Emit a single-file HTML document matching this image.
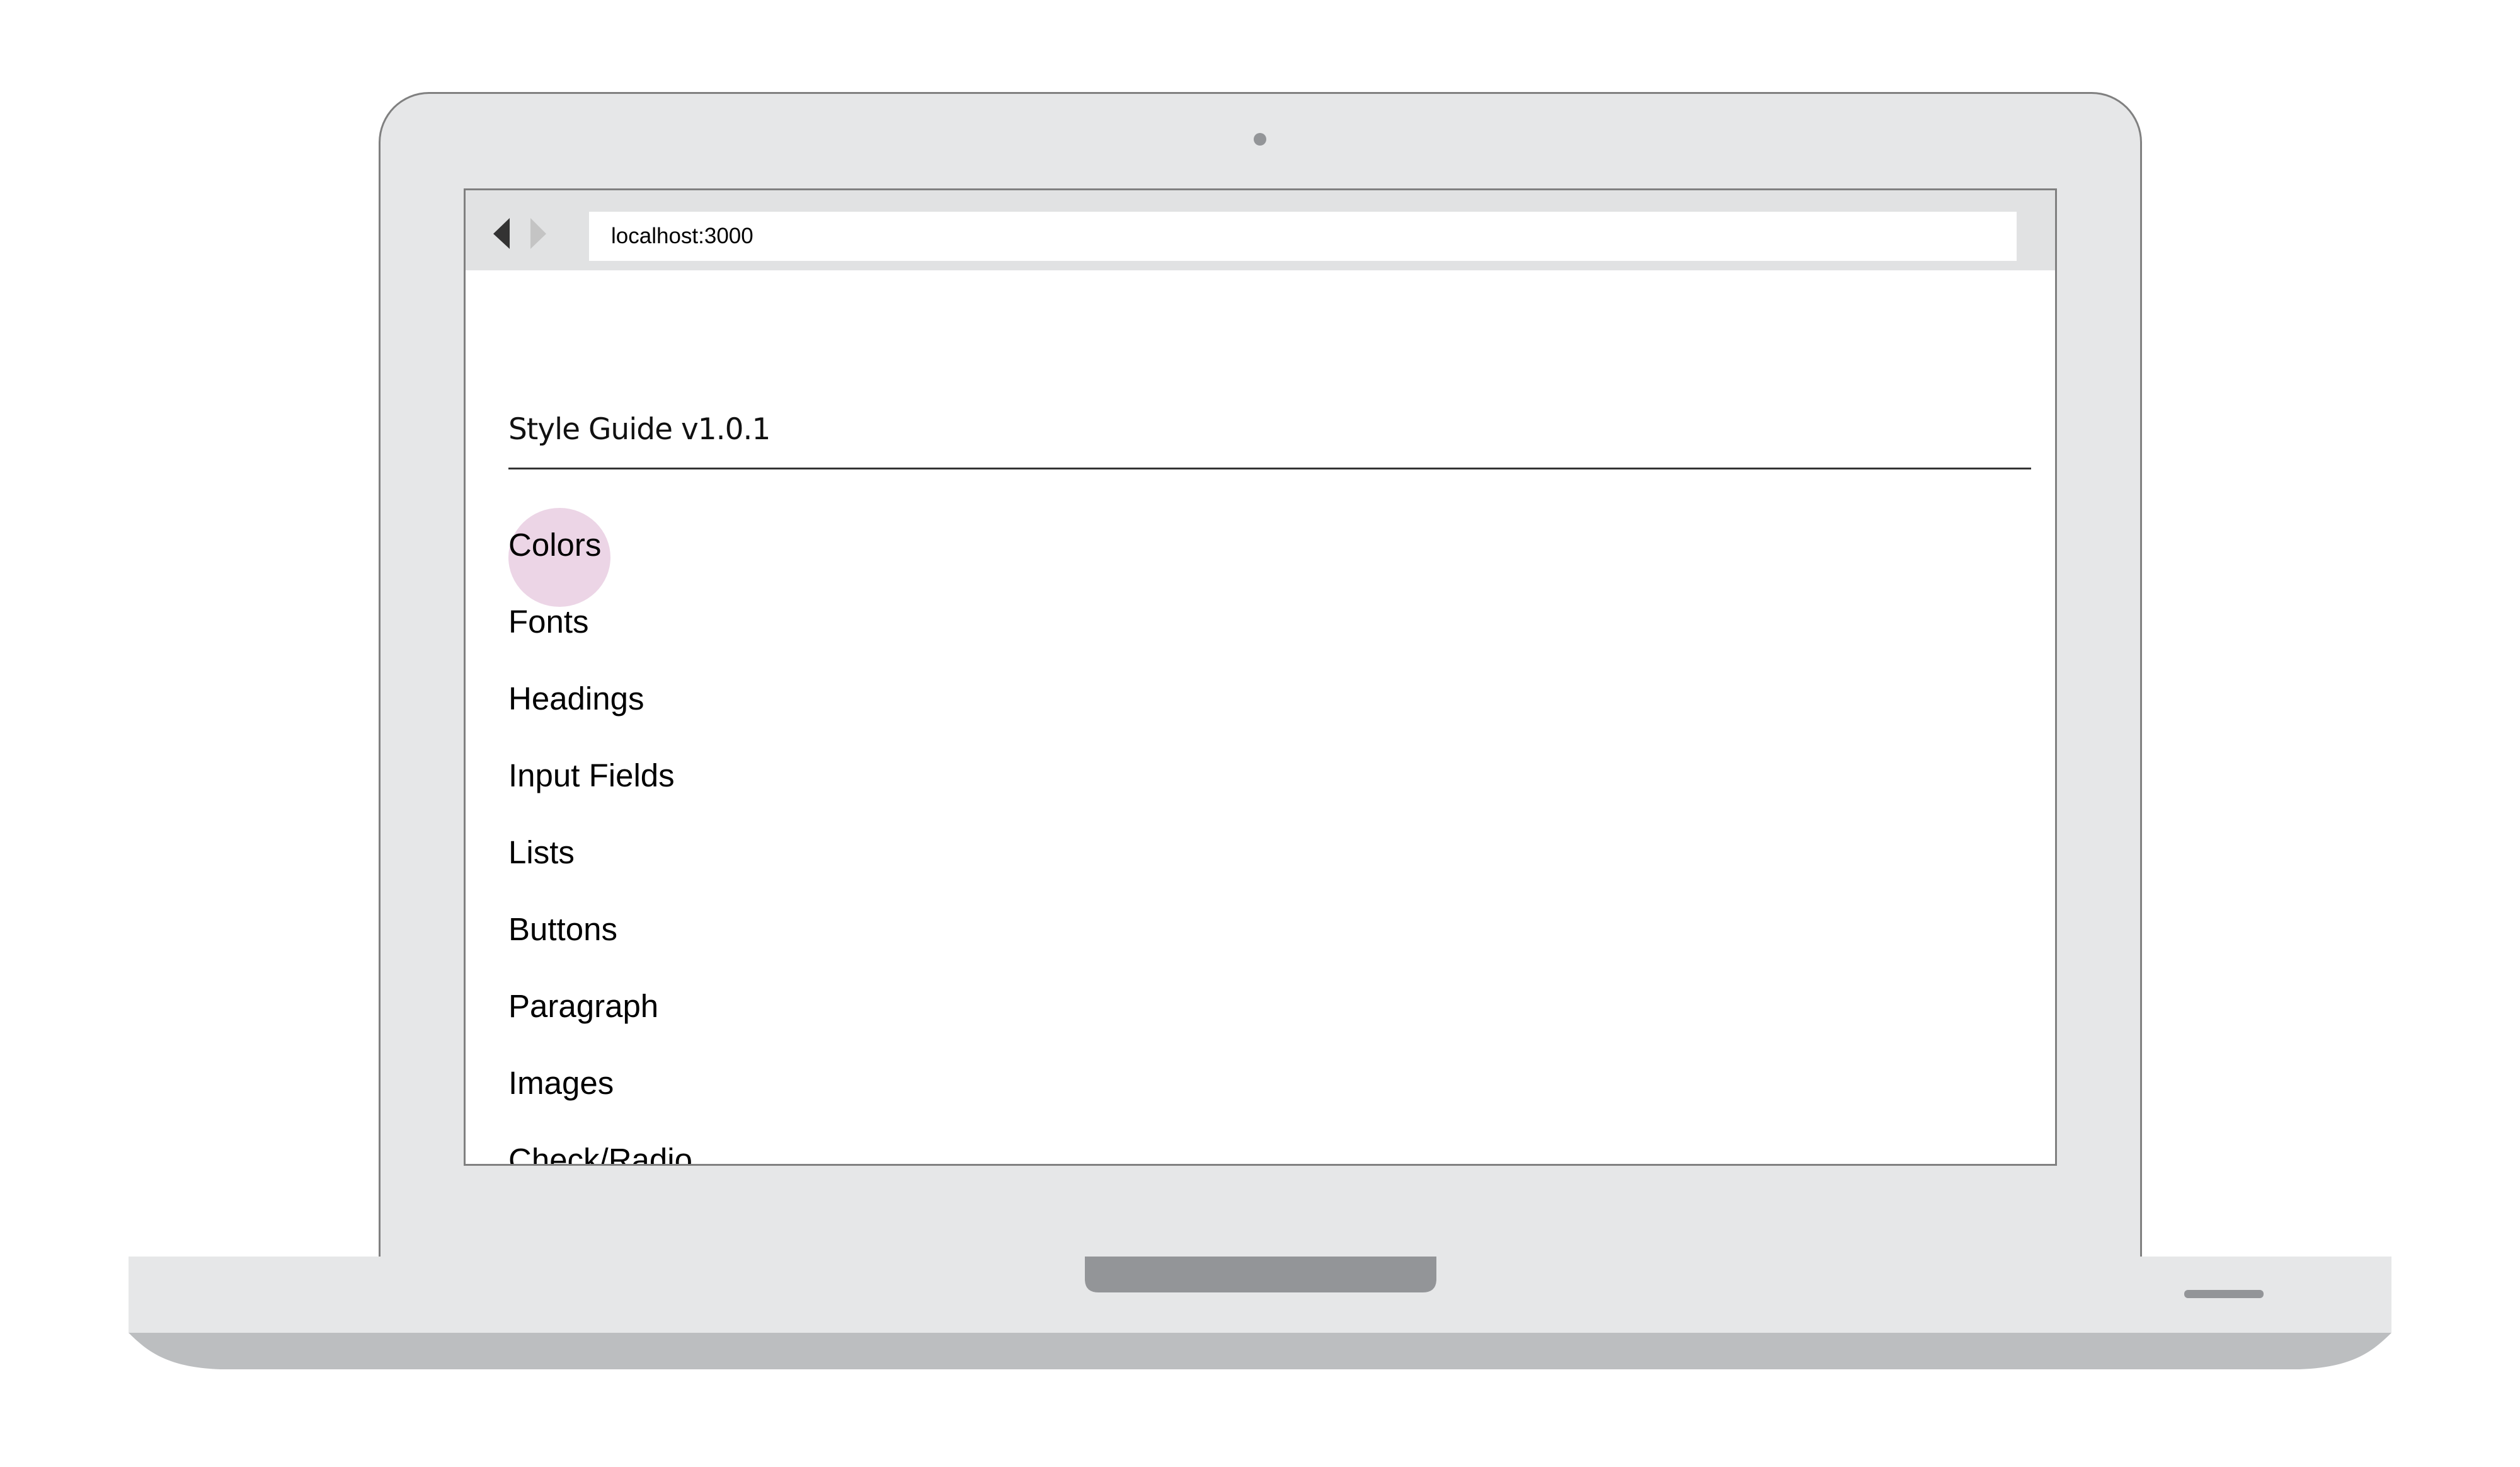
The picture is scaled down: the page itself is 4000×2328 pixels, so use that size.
<!DOCTYPE html>
<html><head><meta charset="utf-8"><style>
*{margin:0;padding:0;box-sizing:border-box}
body{width:4000px;height:2328px;background:#fff;position:relative;overflow:hidden;font-family:"Liberation Sans",sans-serif}
.abs{position:absolute}
#lid{left:601px;top:146px;width:2799px;height:1900px;background:#e6e7e8;border:3px solid #808080;border-bottom:none;border-radius:80px 80px 0 0}
#cam{left:1990px;top:211px;width:20px;height:20px;border-radius:50%;background:#939598}
#screen{left:736px;top:299px;width:2529px;height:1551px;background:#fff;border:3px solid #808080;overflow:hidden}
#bar{left:0;top:0;width:100%;height:127px;background:#e1e2e3}
#url{left:196px;top:34px;width:2266px;height:78px;background:#fff;font-size:35px;color:#000;line-height:78px;padding-left:35px}
.item{position:absolute;left:68px;font-size:51px;color:#000;line-height:1;white-space:nowrap}
#rule{left:68px;top:440px;width:2417px;height:3px;background:#333}
</style></head><body>
<div id="lid" class="abs"></div>
<div id="cam" class="abs"></div>
<div id="screen" class="abs">
 <div id="bar" class="abs">
  <svg class="abs" style="left:0;top:0" width="190" height="127"><polygon points="70,44 44,69 70,93" fill="#333"/><polygon points="103,44 128,69 103,93" fill="#c4c4c4"/></svg>
  <div id="url" class="abs">localhost:3000</div>
 </div>
 <div class="item" style="top:356px;left:68px;font-family:'DejaVu Sans','Liberation Sans',sans-serif;font-size:47px;letter-spacing:-1px;color:#111">Style Guide v1.0.1</div>
 <div id="rule" class="abs"></div>
 <div class="abs" style="left:68px;top:504px;width:162px;height:157px;border-radius:50%;background:#ecd5e6"></div>
 <div class="item" style="top:537px">Colors</div>
 <div class="item" style="top:659px">Fonts</div>
 <div class="item" style="top:781px">Headings</div>
 <div class="item" style="top:903px">Input Fields</div>
 <div class="item" style="top:1025px">Lists</div>
 <div class="item" style="top:1147px">Buttons</div>
 <div class="item" style="top:1269px">Paragraph</div>
 <div class="item" style="top:1391px">Images</div>
 <div class="item" style="top:1513px">Check/Radio</div>
</div>
<svg class="abs" style="left:0;top:0" width="4000" height="2328">
 <rect x="204" y="1994" width="3592" height="121" fill="#e6e7e8"/>
 <path d="M204 2115 L3796 2115 C3770 2140 3740 2170 3650 2173 L350 2173 C260 2170 230 2140 204 2115 Z" fill="#bcbec0"/>
 <path d="M1722 1994 L2280 1994 L2280 2030 Q2280 2051 2258 2051 L1744 2051 Q1722 2051 1722 2030 Z" fill="#939598"/>
 <rect x="3467" y="2047" width="126" height="13" rx="6" fill="#939598"/>
</svg>
</body></html>
